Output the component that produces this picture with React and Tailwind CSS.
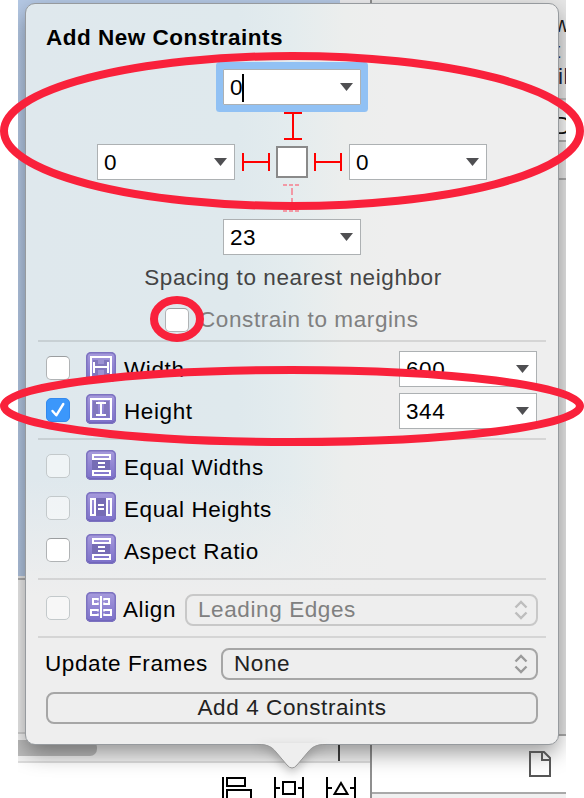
import React from 'react';

function Combo({ value, caret, focused }) {
  return (
    <div
      className={
        'flex h-9 w-[138px] shrink-0 items-center justify-between border border-[#adb1b3] bg-white pl-[6px] pr-[7px] text-black ' +
        (focused ? 'shadow-[0_0_0_7px_#91c1f4] rounded-[1px]' : '')
      }
    >
      <span className="flex items-center pt-[2px]">
        {value}
        {caret && <span className="-ml-[1px] -mt-[1px] h-[28px] w-[2px] bg-black" />}
      </span>
      <svg width="13" height="8" viewBox="0 0 13 8">
        <path d="M0 0H13L6.5 8Z" fill="#4f4f52" />
      </svg>
    </div>
  );
}

function Check({ checked, disabled }) {
  if (checked) {
    return (
      <span className="mb-[2px] flex h-6 w-6 shrink-0 items-center justify-center rounded-[5px] border border-[#3389ee] bg-[#3b97fb]">
        <svg width="16" height="16" viewBox="0 0 16 16" fill="none">
          <path d="M2.500 9L6.300 13.300L13.300 2" stroke="white" strokeWidth="2.400" strokeLinecap="round" strokeLinejoin="round" />
        </svg>
      </span>
    );
  }
  return (
    <span
      className={
        'mb-[2px] h-6 w-6 shrink-0 rounded-[5px] border ' +
        (disabled ? 'border-[#c3c9cb] bg-white/50' : 'border-[#b0b3b5] border-t-[#9b9ea0] bg-white')
      }
    />
  );
}

const glyphs = {
  width: (
    <>
      <rect x="5" y="5" width="20" height="20" strokeWidth="2" />
      <path d="M7 8h16v15H7z" fill="#8177bd" stroke="none" />
      <path d="M12 7h6v5h-6zM12 18h6v5h-6z" fill="#9c92d2" stroke="none" />
      <path d="M8 10v11M22 10v11M8 15h14" strokeWidth="2" />
    </>
  ),
  height: (
    <>
      <rect x="5" y="5" width="20" height="20" strokeWidth="2" />
      <path d="M7 7h5v16H7zM18 7h5v16h-5z" fill="#8177bd" stroke="none" />
      <path d="M10 9h10M10 21h10M15 9v12" strokeWidth="2" />
    </>
  ),
  equalV: (
    <>
      <path d="M6 10h18v10H6z" fill="#766cb5" stroke="none" />
      <rect x="7" y="5" width="17" height="4" strokeWidth="2" />
      <rect x="7" y="21" width="17" height="4" strokeWidth="2" />
      <path d="M12 13h7M12 17h7" strokeWidth="2" />
    </>
  ),
  equalH: (
    <>
      <path d="M10 6h10v18H10z" fill="#766cb5" stroke="none" />
      <rect x="5" y="7" width="4" height="16" strokeWidth="2" />
      <rect x="21" y="7" width="4" height="16" strokeWidth="2" />
      <path d="M12 13h6M12 17h6" strokeWidth="2" />
    </>
  ),
  align: (
    <>
      <path d="M15 4v22" strokeWidth="2" />
      <path d="M12 7H7v5h5M12 18H5v5h7M18 7h5v5h-5M18 18h7v5h-7" strokeWidth="2" />
      <path d="M12 6v2.500M12 10.500v2.500M12 17v2.500M12 21.500v2.500M18 6v2.500M18 10.500v2.500M18 17v2.500M18 21.500v2.500" strokeWidth="1.500" />
    </>
  ),
};

function Glyph({ kind }) {
  return (
    <span className="mb-1 h-[30px] w-[30px] shrink-0 rounded-[5px] bg-linear-to-b from-[#a79bdc] to-[#7b6fc9] shadow-[inset_0_0_0_1.500px_#7c72c0,inset_0_-2px_0_#675bb6]">
      <svg width="30" height="30" viewBox="0 0 30 30" fill="none" stroke="white">
        {glyphs[kind]}
      </svg>
    </span>
  );
}

function Row({ kind, label, value, checked, disabled }) {
  return (
    <div className="flex h-[42px] items-center pl-5 pr-[21px]">
      <Check checked={checked} disabled={disabled} />
      <div className="ml-4 flex items-center">
        <Glyph kind={kind} />
      </div>
      <span className="ml-2 flex-1 pt-[2px] text-black">{label}</span>
      {value && <Combo value={value} />}
    </div>
  );
}

function Separator({ space }) {
  return <div className={'mx-3 h-[2px] shrink-0 bg-black/10 ' + space} />;
}

function Chevrons({ color }) {
  return (
    <svg width="14" height="20" viewBox="0 0 14 20" fill="none" stroke={color} strokeWidth="2.400">
      <path d="M1.500 7.500L7 2L12.500 7.500M1.500 12.500L7 18L12.500 12.500" />
    </svg>
  );
}

function HStrut() {
  return (
    <svg width="28" height="18" viewBox="0 0 28 18" fill="none" stroke="#ff0000" strokeWidth="2">
      <path d="M1 0v18M27 0v18M1 9h26" />
    </svg>
  );
}

function Backdrop() {
  return (
    <div className="relative ml-[18px] flex h-full w-[548px] overflow-hidden bg-white">
      <div className="flex w-[352px] shrink-0 flex-col">
        <div className="flex h-[576px]">
          <div className="w-[322px] bg-linear-to-b from-[#b4c8e4] to-[#b0c3de]" />
          <div className="flex-1 bg-[#ececee]" />
        </div>
        <div className="h-[2px] bg-[#e6e6e6]" />
        <div className="h-[2px] bg-[#adadad]" />
        <div className="h-[152px] bg-[#ececec]" />
        <div className="h-[2px] bg-[#cfcfcf]" />
        <div className="flex h-[27px] justify-between bg-[#f2f2f2]">
          <div className="mt-[6px] h-4 w-[79px] rounded-r-[7px] bg-[#bcbcbc]" />
          <div className="mr-[30px] w-[2px] bg-[#3f3f3f]" />
        </div>
        <div className="h-[2px] bg-[#dddddd]" />
        <div className="flex-1 overflow-hidden bg-white" />
      </div>
      <div className="w-[2px] shrink-0 bg-[#8f8f8f]" />
      <div className="flex min-w-0 flex-1 flex-col bg-[#e6e6e6] text-[#111111]">
        <div className="h-[98px] overflow-hidden pl-[182px] pt-[12px] leading-[26px]">
          <div className="whitespace-nowrap text-[#1c1c1e]">w</div>
          <div className="whitespace-nowrap text-[#1d2a5c]">t</div>
          <div className="whitespace-nowrap pl-[4px] text-[#1d2340]">il</div>
        </div>
        <div className="h-[2px] bg-[#bdbdbd]" />
        <div className="h-[9px] bg-[#e6e6e6]" />
        <div className="h-[33px] overflow-hidden border-b-2 border-[#aeaeae] bg-[#f6f6f6] pl-[182px] text-[24px] leading-[33px]">D</div>
        <div className="h-[36px] bg-[#e6e6e6]" />
        <div className="h-[2px] bg-[#a9a9a9]" />
        <div className="h-[554px]" />
        <div className="h-[2px] bg-[#a9a9a9]" />
        <div className="h-[56px] bg-white" />
        <div className="h-[2px] bg-[#a9a9a9]" />
        <div className="flex-1 bg-[#f0f0f0]" />
      </div>
      <div className="absolute left-[8px] top-[4px] h-[740px] w-[532px] rounded-[10px] shadow-[0_9px_22px_rgba(0,0,0,0.4)]" />
      <svg className="absolute left-[202px] top-[776px]" width="140" height="22" viewBox="220 776 140 22" fill="none" stroke="black" strokeWidth="2">
        <path d="M223 777v24" />
        <rect x="227" y="778" width="18" height="8" />
        <rect x="227" y="790" width="24" height="9" />
        <path d="M275 777v24M303 777v24M275 788h5M298 788h5" />
        <rect x="283" y="782" width="12" height="12" />
        <path d="M327 777v24M355 777v24M327 788h5M350 788h5M341 783L347.500 794H334.500Z" />
      </svg>
      <svg className="absolute left-[511px] top-[751px]" width="22" height="26" viewBox="0 0 22 26" fill="none" stroke="#555" strokeWidth="2">
        <path d="M1 1H15L21 7V25H1Z" />
        <path d="M13 2V9H20" />
      </svg>
    </div>
  );
}

function Popover() {
  return (
    <div className="absolute left-[25px] top-[3px] flex h-[742px] w-[534px] flex-col rounded-[10px] border border-[#969a9e] bg-[linear-gradient(to_bottom,transparent_64%,#eeeeee_80%),linear-gradient(to_right,#dfe8ed_0%,#dfe9ed_40%,#e4ecee_50%,#eceeed_60%,#eeeeee_68%)]">
      <div className="mt-[19px] flex h-[30px] items-center pl-[20px] text-[22.5px] font-bold tracking-[0.500px] text-black">
        Add New Constraints
      </div>
      <div className="mt-[16px] flex justify-center">
        <Combo value="0" caret focused />
      </div>
      <svg className="ml-[258px] mt-[7px] shrink-0" width="18" height="28" viewBox="0 0 18 28" fill="none" stroke="#ff0000" strokeWidth="2">
        <path d="M0 1h18M0 27h18M9 1v26" />
      </svg>
      <div className="mt-1 flex items-center justify-center">
        <Combo value="0" />
        <div className="mx-[6px] flex items-center gap-[6px]">
          <div className="ml-px"><HStrut /></div>
          <div className="h-8 w-8 border-2 border-[#8a8a8a] bg-white" />
          <div className="mr-px"><HStrut /></div>
        </div>
        <Combo value="0" />
      </div>
      <svg className="ml-[257px] mt-1 shrink-0" width="18" height="28" viewBox="0 0 18 28" fill="none" stroke="#f299a5" strokeWidth="2" strokeDasharray="4 2">
        <path d="M0 1h18M0 27h18" />
        <path d="M9 4v22" strokeDasharray="7 3" />
      </svg>
      <div className="mt-[7px] flex justify-center">
        <Combo value="23" />
      </div>
      <div className="mt-2 flex h-[30px] items-center justify-center pl-[2px] text-[#444444]">
        Spacing to nearest neighbor
      </div>
      <div className="mt-[15px] flex h-6 items-center gap-[10px] pl-[139px]">
        <div className="mt-[2px] flex"><Check /></div>
        <span className="text-[#808080]">Constrain to margins</span>
      </div>
      <Separator space="mt-2 mb-[6px]" />
      <Row kind="width" label="Width" value="600" />
      <Row kind="height" label="Height" value="344" checked />
      <Separator space="my-[6px]" />
      <Row kind="equalV" label="Equal Widths" disabled />
      <Row kind="equalH" label="Equal Heights" disabled />
      <Row kind="equalV" label="Aspect Ratio" />
      <Separator space="mt-[6px] mb-[8px]" />
      <div className="flex h-10 items-center pl-5 pr-5">
        <div className="flex pt-[2px]"><Check disabled /></div>
        <div className="ml-4 flex items-center pt-px">
          <Glyph kind="align" />
        </div>
        <span className="ml-[7px] pt-[4px] text-black">Align</span>
        <div className="ml-auto mt-1 flex h-8 w-[353px] items-center justify-between rounded-[8px] border-2 border-[#c8c8c8] pl-[11px] pr-[8px] text-[#808080]">
          <span>Leading Edges</span>
          <Chevrons color="#bdbdbd" />
        </div>
      </div>
      <Separator space="mt-2" />
      <div className="mt-[10px] flex h-8 items-center justify-between pl-[19px] pr-5 text-black">
        <span>Update Frames</span>
        <div className="flex h-8 w-[317px] items-center justify-between rounded-[8px] border-2 border-[#a6a6a6] pl-[11px] pr-[8px] text-[#222222]">
          <span>None</span>
          <Chevrons color="#9a9a9a" />
        </div>
      </div>
      <div className="mx-5 mt-3 flex h-8 items-center justify-center rounded-[8px] border-2 border-[#a6a6a6] text-[#222222]">
        Add 4 Constraints
      </div>
      <svg className="absolute left-[232px] top-[739px] drop-shadow-[0_4px_5px_rgba(0,0,0,0.22)]" width="68" height="27" viewBox="0 0 68 27">
        <path d="M0 0V1C10 1 14 4 18 9L29 22Q34 28 39 22L50 9C54 4 58 1 68 1V0Z" fill="#eeeeee" />
        <path d="M0 1.500C10 1.500 14 4 18 9L29 22Q34 28 39 22L50 9C54 4 58 1.500 68 1.500" fill="none" stroke="#969696" strokeWidth="1" />
      </svg>
    </div>
  );
}

export default function App() {
  return (
    <div className="relative h-[798px] w-[584px] overflow-hidden bg-white font-['Liberation_Sans',Arial,sans-serif] text-[22.5px] leading-[26px] tracking-[0.600px]">
      <Backdrop />
      <Popover />
      <svg className="pointer-events-none absolute inset-0" width="584" height="798" viewBox="0 0 584 798" fill="none" stroke="#f9213b" strokeWidth="8">
        <ellipse cx="292" cy="131" rx="288" ry="75" />
        <ellipse cx="177" cy="319" rx="23" ry="19" />
        <ellipse cx="292" cy="406" rx="288" ry="36" />
      </svg>
    </div>
  );
}
